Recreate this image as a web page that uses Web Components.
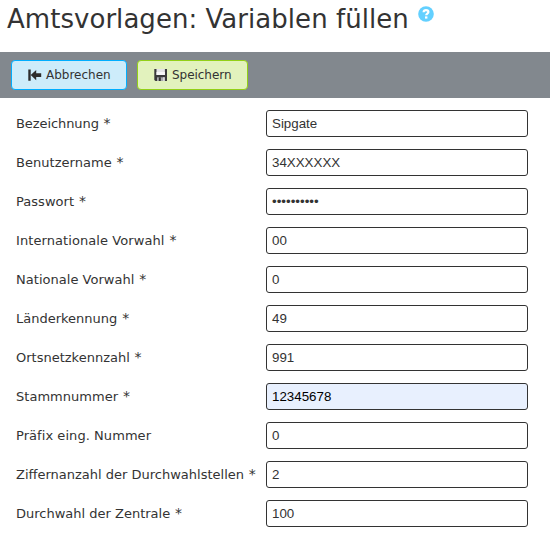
<!DOCTYPE html>
<html lang="de">
<head>
<meta charset="utf-8">
<title>Amtsvorlagen</title>
<style>
html,body{margin:0;background:#fff}
body{font-family:Verdana,"DejaVu Sans",sans-serif;color:#333}
</style>
</head>
<body>
<template-page></template-page>
<script>
const define = (name, html) => customElements.define(name, class extends HTMLElement {
  constructor() {
    super();
    this.attachShadow({mode: 'open'}).innerHTML = html;
  }
});

define('help-badge', `<style>:host{display:block;width:16px;height:16px}svg{display:block}</style>
<svg width="16" height="16" viewBox="0 0 16 16"><circle cx="8" cy="8" r="7.8" fill="#63d0ff"/><path d="M5.6 6.2C5.7 4.7 6.6 4.1 8 4.1s2.4.7 2.4 1.9c0 1.6-2.2 1.5-2.2 3.2" fill="none" stroke="#fff" stroke-width="2.2"/><rect x="7" y="10.4" width="2.4" height="2.2" fill="#fff"/></svg>`);

define('page-title', `<style>
:host{display:flex;align-items:flex-start;height:52px;padding-left:7px;box-sizing:border-box}
h1{margin:3px 0 0;font-size:26px;line-height:32px;font-weight:400;white-space:nowrap;width:411px;letter-spacing:.04px}
help-badge{margin-top:6px}
</style><h1><slot></slot></h1><help-badge></help-badge>`);

define('tool-bar', `<style>:host{display:flex;gap:10px;align-items:flex-start;height:46px;padding:8px 11px;box-sizing:border-box;background:#82888e}</style><slot></slot>`);

define('tool-button', `<style>
:host{display:flex;align-items:center;height:30px;box-sizing:border-box;border:1px solid var(--edge);border-radius:4px;background:var(--fill);padding-left:16px;font-size:12px;line-height:28px;white-space:nowrap}
::slotted(svg){display:block;flex:none;margin-right:4px}
</style><slot name="icon"></slot><slot></slot>`);

define('form-field', `<style>
:host{display:grid;grid-template-columns:250px 262px;align-items:center;height:27px}
.label{font-size:13px;line-height:27px;white-space:nowrap;letter-spacing:var(--track,.03px)}
.box{box-sizing:border-box;height:27px;border:1px solid #333;border-radius:3px;padding-left:5px;font:13.333px/25px "Liberation Sans",Arial,sans-serif;background:#fff}
:host([filled]) .box{background:#e8f0fe;color:#000}
</style><div class="label"><slot></slot></div><div class="box"><slot name="value"></slot></div>`);

define('field-list', `<style>:host{display:flex;flex-direction:column;gap:12px;padding:12px 0 0 16px}</style><slot></slot>`);

define('template-page', `<style>
:host{display:block;width:550px;height:547px;overflow:hidden}
.cancel{--edge:#00aeff;--fill:#cdecfa;width:116px}
.save{--edge:#93d017;--fill:#e2f2bd;width:111px;letter-spacing:-.04px}
i{font-style:normal;margin-left:.7px;font-size:14px;line-height:1}
</style>
<page-title>Amtsvorlagen: Variablen füllen</page-title>
<tool-bar>
<tool-button class="cancel"><svg slot="icon" width="14" height="14" viewBox="0 0 14 14"><path d="M.3 1.5h2.4v11.2H.3zM2.7 7.1 8.2 2v3.2h5v3.9h-5v3.2z" fill="#2d2d2d"/></svg>Abbrechen</tool-button>
<tool-button class="save"><svg slot="icon" width="14" height="14" viewBox="0 0 14 14"><path d="M.3 1H13v12H1.5L.3 12z" fill="#3a3a3c"/><path d="M2.5 1h8.4v6H2.5z" fill="#e4e4e7"/><path d="M2.5 4h8.4v3H2.5z" fill="#f6f6f8"/><path d="M3 9.3h7.8V13H3z" fill="#a9aaae"/><path d="M4.8 9.3h2V13h-2z" fill="#333"/><path d="M9 9.3h1.8V13H9z" fill="#d5d6d8"/></svg>Speichern</tool-button>
</tool-bar>
<field-list>
<form-field style="--track:-.08px">Bezeichnung <i>*</i><span slot="value">Sipgate</span></form-field>
<form-field>Benutzername <i>*</i><span slot="value">34XXXXXX</span></form-field>
<form-field>Passwort <i>*</i><span slot="value">••••••••••</span></form-field>
<form-field style="--track:.08px">Internationale Vorwahl <i>*</i><span slot="value">00</span></form-field>
<form-field>Nationale Vorwahl <i>*</i><span slot="value">0</span></form-field>
<form-field style="--track:0px">Länderkennung <i>*</i><span slot="value">49</span></form-field>
<form-field style="--track:0px">Ortsnetzkennzahl <i>*</i><span slot="value">991</span></form-field>
<form-field>Stammnummer <i>*</i><span slot="value">12345678</span></form-field>
<form-field style="--track:.06px">Präfix eing. Nummer<span slot="value">0</span></form-field>
<form-field style="--track:0px">Ziffernanzahl der Durchwahlstellen <i>*</i><span slot="value">2</span></form-field>
<form-field style="--track:0px">Durchwahl der Zentrale <i>*</i><span slot="value">100</span></form-field>
</field-list>`.replace('<form-field>Stamm', '<form-field filled>Stamm'));
</script>
</body>
</html>
